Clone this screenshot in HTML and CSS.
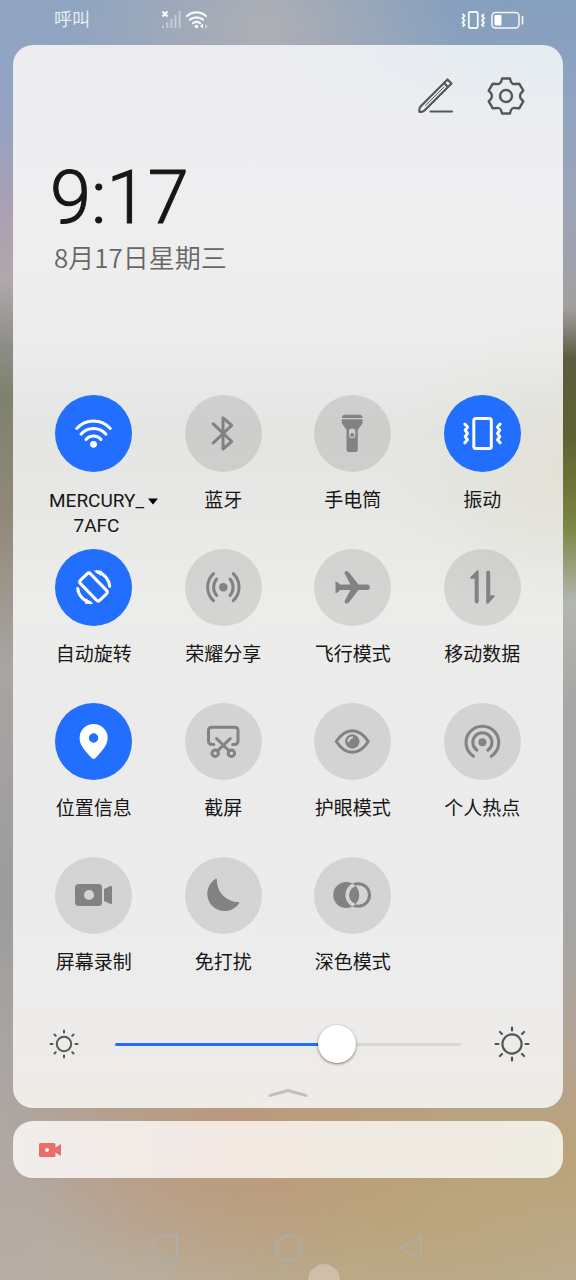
FILE: index.html
```html
<!DOCTYPE html>
<html lang="zh-CN">
<head>
<meta charset="utf-8">
<meta name="viewport" content="width=device-width, initial-scale=1">
<title>控制中心</title>
<link rel="stylesheet" href="styles.css">
</head>
<body>
<div class="screen">
  <header class="status">
    <span class="carrier">呼叫</span>
    <svg class="signal" width="48" height="20" viewBox="0 0 48 20" aria-hidden="true">
      <path d="M1.5 1.5l5 5M6.500 1.500l-5 5" stroke="#fff" stroke-width="1.800"/>
      <path d="M2 15.500v2.500M6.300 12.500v5.500M10.400 9v9M14.500 5v13M18.600 1v17" stroke="#fff" stroke-opacity=".4" stroke-width="2"/>
      <g fill="none" stroke="#fff" stroke-opacity=".92" stroke-width="2.200" stroke-linecap="round">
        <path d="M26 6a14 14 0 0 1 19 0M29 9.700a10 10 0 0 1 13 0M32 13.200a5.500 5.500 0 0 1 7 0"/>
      </g>
      <circle cx="35.500" cy="16.500" r="1.800" fill="#fff"/>
      <path d="M42 13.500v5l-3-2.500z" fill="#fff"/>
      <path d="M44 14v4.500l3-2.300z" fill="#fff" fill-opacity=".45"/>
    </svg>
    <svg class="power" width="64" height="20" viewBox="0 0 64 20" fill="none" stroke="#fff" stroke-opacity=".92" aria-hidden="true">
      <rect x="7.800" y="2" width="9" height="16" rx="1.500" stroke-width="1.800"/>
      <path d="M1.500 4l2 2-2 2.200 2 2.200-2 2.200 2 2.200-2 1.700M23 4l-2 2 2 2.200-2 2.200 2 2.200-2 2.200 2 1.700" stroke-width="1.800"/>
      <rect x="31" y="2.500" width="27" height="15.500" rx="3.500" stroke-width="1.500"/>
      <rect x="33.500" y="5" width="7" height="10.500" rx="1" fill="#fff" stroke="none"/>
      <path d="M61.500 6v8.500" stroke-width="1.600"/>
    </svg>
  </header>

  <main class="panel">
    <div class="tools">
      <button class="tool" aria-label="编辑">
        <svg width="38" height="38" viewBox="0 0 38 38" fill="none" stroke="#555658" stroke-width="2.200" stroke-linejoin="round" stroke-linecap="round" aria-hidden="true">
          <path d="M30.500 2.500l4 4L7.500 33.500Q5.500 35.300 2.300 34.700Q1.700 31.500 3.500 29.500zM27 6l4 4"/>
          <path d="M8.500 28.500L27 10" stroke-width="1"/>
          <path d="M13.500 34.500H35"/>
        </svg>
      </button>
      <button class="tool" aria-label="设置">
        <svg width="40" height="40" viewBox="-20 -20 40 40" fill="none" stroke="#555658" stroke-width="2.400" stroke-linejoin="round" aria-hidden="true">
          <path d="M-4-17.500H4L5-14Q6.500-11.500 9-12L13.200-12.300L17.300-5.400L14.700-2.500Q13.500 0 14.700 2.500L17.300 5.400L13.200 12.300L9 12Q6.500 11.500 5 14L4 17.500H-4L-5 14Q-6.500 11.500-9 12L-13.200 12.300L-17.300 5.400L-14.700 2.500Q-13.500 0-14.700-2.500L-17.300-5.400L-13.200-12.300L-9-12Q-6.500-11.500-5-14z"/>
          <circle r="6"/>
        </svg>
      </button>
    </div>

    <time class="clock" datetime="09:17">9:17</time>
    <p class="date">8月17日星期三</p>

    <section class="toggles">
      <button class="toggle on" aria-pressed="true">
        <svg class="disc" viewBox="0 0 77 77" aria-hidden="true">
          <g class="line"><path d="M21.700 33.500a22.600 22.600 0 0 1 33.600 0M26 39.200a16.400 16.400 0 0 1 25 0M31 44.500a9.600 9.600 0 0 1 15 0"/></g>
          <circle class="solid" cx="38.500" cy="49.300" r="3.400"/>
        </svg>
        <span class="label network"><span>MERCURY_<br>7AFC</span><svg class="caret" width="10" height="7" viewBox="0 0 10 7" aria-hidden="true"><path d="M0 .5h10L5 6.500z"/></svg></span>
      </button>
      <button class="toggle" aria-pressed="false">
        <svg class="disc" viewBox="0 0 77 77" aria-hidden="true"><path class="line" d="M28.200 28.800L46.700 46.500L38 54V22.800L46.700 30.300L28.200 48"/></svg>
        <span class="label">蓝牙</span>
      </button>
      <button class="toggle" aria-pressed="false">
        <svg class="disc" viewBox="0 0 77 77" aria-hidden="true">
          <path class="solid" d="M31 19.700h14.500q3 0 3 3.300h-20.700q0-3.300 3.200-3.300z"/>
          <path class="solid" fill-rule="evenodd" d="M27.800 24.300h20.700v3q0 1.500-1 2.500l-3.700 5V54.500q0 2.500-2.500 2.500h-6.300q-2.500 0-2.500-2.500V34.800l-3.700-5q-1-1-1-2.500zM38.200 33.500q-3.200 0-3.200 3.200v3.300q0 3.200 3.200 3.200t3.200-3.200v-3.300q0-3.200-3.200-3.200z"/>
          <circle class="solid" cx="38.200" cy="40" r="2.100"/>
        </svg>
        <span class="label">手电筒</span>
      </button>
      <button class="toggle on" aria-pressed="true">
        <svg class="disc" viewBox="0 0 77 77" aria-hidden="true"><g class="line"><rect x="29.800" y="23.500" width="17.500" height="30" rx="2"/><path d="M20.800 29l2.700 3-2.300 3.200 2.300 3.200-2.300 3.200 2.300 3.200-2.700 3M56.200 29l-2.700 3 2.300 3.200-2.300 3.200 2.300 3.200-2.300 3.200 2.700 3"/></g></svg>
        <span class="label">振动</span>
      </button>

      <button class="toggle on" aria-pressed="true">
        <svg class="disc" viewBox="0 0 77 77" aria-hidden="true">
          <g class="line"><rect x="24.500" y="31" width="28" height="14" rx="2.500" transform="rotate(46 38.500 38)"/><path d="M42 22.700a16.500 16.500 0 0 1 12.700 14.600M22.700 39.500a16.500 16.500 0 0 0 12.700 14.200"/></g>
          <path class="solid" d="M38.500 21.500l8.500.3-1 5.200zM38.500 55l-8.500-.3 1-5.200z"/>
        </svg>
        <span class="label">自动旋转</span>
      </button>
      <button class="toggle" aria-pressed="false">
        <svg class="disc" viewBox="0 0 77 77" aria-hidden="true"><path class="line" d="M31.700 30a12.500 12.500 0 0 0 0 16.500M28.500 24.700a18.500 18.500 0 0 0 0 27M45 30a12.500 12.500 0 0 1 0 16.500M48.200 24.700a18.500 18.500 0 0 1 0 27"/><circle class="solid" cx="38.300" cy="38.200" r="4.300"/></svg>
        <span class="label">荣耀分享</span>
      </button>
      <button class="toggle" aria-pressed="false">
        <svg class="disc" viewBox="0 0 77 77" aria-hidden="true"><path class="solid" d="M21.500 32.500q2 0 3.200 1.700l1.300 1.400h10.500l-5.800-11q-.5-2.500 1.600-2.700q1.700-.1 2.700 1.500L44.500 35.500H53a2.800 2.800 0 0 1 0 5.600H44.500L35 53.200q-1 1.500-2.700 1.400q-2.100-.3-1.600-2.700l5.800-10.900H26l-1.300 1.400q-1.200 1.700-3.200 1.700z"/></svg>
        <span class="label">飞行模式</span>
      </button>
      <button class="toggle" aria-pressed="false">
        <svg class="disc" viewBox="0 0 77 77" aria-hidden="true"><path class="solid" d="M34.700 22v30.500a2 2 0 0 1-4 0V29.800h-4q-1-.5-.3-1.500l6-6.500q1.800-1.200 2.300.2zM42.200 54v-30.500a2 2 0 0 1 4 0V46.200h4q1 .5.3 1.500l-6 6.500q-1.800 1.200-2.300-.2z"/></svg>
        <span class="label">移动数据</span>
      </button>

      <button class="toggle on" aria-pressed="true">
        <svg class="disc" viewBox="0 0 77 77" aria-hidden="true"><path class="solid" fill-rule="evenodd" d="M38.600 21a14 14 0 0 0-14 14c0 6.500 3.500 11 12.300 20.200q1.700 1.500 3.400 0C49 46 52.600 41.500 52.600 35a14 14 0 0 0-14-14zm0 9.300a4.700 4.700 0 1 1 0 9.400a4.700 4.700 0 0 1 0-9.400z"/></svg>
        <span class="label">位置信息</span>
      </button>
      <button class="toggle" aria-pressed="false">
        <svg class="disc" viewBox="0 0 77 77" aria-hidden="true"><path class="line" d="M28.800 41.500h-1.500q-3.800 0-3.800-3.500V27.500q0-3.200 3.500-3.200h22.500q3.500 0 3.500 3.200V38q0 3.500-3.800 3.500h-1.500M31.500 35.500L44 47.800M45.300 35.500L32.500 47.800"/><circle class="line" cx="30.200" cy="50.300" r="3.200"/><circle class="line" cx="46.400" cy="50.300" r="3.200"/></svg>
        <span class="label">截屏</span>
      </button>
      <button class="toggle" aria-pressed="false">
        <svg class="disc" viewBox="0 0 77 77" aria-hidden="true"><path class="line" d="M22.300 38.500Q29.300 27.700 38.300 27.700T54.300 38.500Q47.300 49.300 38.300 49.300T22.300 38.500z"/><circle class="solid" cx="38.300" cy="38.500" r="7.200"/><path d="M34.500 38.200q.3-3.300 3.700-3.800" fill="none" stroke="#d6d6d6" stroke-width="2" stroke-linecap="round"/></svg>
        <span class="label">护眼模式</span>
      </button>
      <button class="toggle" aria-pressed="false">
        <svg class="disc" viewBox="0 0 77 77" aria-hidden="true"><path class="line" d="M33 47.200a9.600 9.600 0 1 1 10.800 0M29.500 53.300a16.400 16.400 0 1 1 17.800 0"/><circle class="solid" cx="38.400" cy="39.300" r="4"/></svg>
        <span class="label">个人热点</span>
      </button>

      <button class="toggle" aria-pressed="false">
        <svg class="disc" viewBox="0 0 77 77" aria-hidden="true"><path class="solid" fill-rule="evenodd" d="M24 27h19.500q3.500 0 3.500 3.500v15q0 3.500-3.500 3.500H24q-4 0-4-3.500v-15q0-3.500 4-3.500zM34 33a5 5 0 1 0 0 10a5 5 0 0 0 0-10zM49 32l6.500-3q1.500-.3 1.500 1v16q0 1.300-1.500 1L49 44z"/></svg>
        <span class="label">屏幕录制</span>
      </button>
      <button class="toggle" aria-pressed="false">
        <svg class="disc" viewBox="0 0 77 77" aria-hidden="true"><path class="solid" d="M30.800 21.700A17.400 17.400 0 1 0 54.200 46.200Q54.700 45 53.500 45.200A22 22 0 0 1 31.800 22q-.2-.9-1-.3z"/></svg>
        <span class="label">免打扰</span>
      </button>
      <button class="toggle" aria-pressed="false">
        <svg class="disc" viewBox="0 0 77 77" aria-hidden="true">
          <clipPath id="left-disc"><circle cx="32.200" cy="38" r="13.100"/></clipPath>
          <circle class="solid" cx="32.200" cy="38" r="13"/>
          <circle class="line" cx="44.200" cy="38" r="11.300"/>
          <circle cx="44.200" cy="38" r="11" fill="none" stroke="#d4d4d4" stroke-width="3.600" clip-path="url(#left-disc)"/>
        </svg>
        <span class="label">深色模式</span>
      </button>
    </section>

    <div class="brightness">
      <svg width="38" height="38" viewBox="-19 -19 38 38" fill="none" stroke="#555" stroke-width="2" stroke-linecap="round" aria-hidden="true">
        <circle r="7.200"/>
        <path d="M0-11.500v-2M0 11.500v2M-11.500 0h-2M11.500 0h2M-8.300-8.300l-1.200-1.200M8.300-8.300l1.200-1.200M-8.300 8.300l-1.200 1.200M8.300 8.300l1.200 1.200"/>
      </svg>
      <input class="slider" type="range" min="0" max="100" value="66" aria-label="亮度">
      <svg width="38" height="38" viewBox="-19 -19 38 38" fill="none" stroke="#555" stroke-width="2.200" stroke-linecap="round" aria-hidden="true">
        <circle r="9.600"/>
        <path d="M0-13.500v-3M0 13.500v3M-13.500 0h-3M13.500 0h3M-10-10l-2-2M10-10l2-2M-10 10l-2 2M10 10l2 2"/>
      </svg>
    </div>
    <button class="handle" aria-label="收起">
      <svg width="42" height="12" viewBox="0 0 42 12" fill="none" stroke="#c2c0be" stroke-width="3" stroke-linecap="round" stroke-linejoin="round" aria-hidden="true"><path d="M3 8.500L21 3.500L39 8.500"/></svg>
    </button>
  </main>

  <article class="notice" aria-label="屏幕录制">
    <svg width="23" height="16" viewBox="0 0 23 16" aria-hidden="true"><path fill="#e57068" fill-rule="evenodd" d="M1.500 1H15q1.500 0 1.500 1.500v11q0 1.500-1.500 1.500H1.500Q0 15 0 13.500v-11Q0 1 1.500 1zM8 6a2 2 0 1 0 0 4a2 2 0 0 0 0-4zM16.500 5.500l5.500-3.500v12l-5.500-3.500z"/></svg>
  </article>

  <nav class="navbar">
    <button aria-label="最近任务"><svg width="27" height="28" viewBox="0 0 27 28" aria-hidden="true"><rect x="2" y="2.500" width="23" height="23" rx="1"/></svg></button>
    <button aria-label="主屏幕"><svg width="27" height="28" viewBox="0 0 27 28" aria-hidden="true"><circle cx="13.500" cy="14" r="12.300"/></svg></button>
    <button aria-label="返回"><svg width="27" height="28" viewBox="0 0 27 28" aria-hidden="true"><path d="M2.500 14L23 2v24z"/></svg></button>
  </nav>
  <span class="touch"></span>
</div>
</body>
</html>
```

FILE: styles.css
```css
* {
  box-sizing: border-box;
}

body {
  margin: 0;
  font-family: Roboto, "Noto Sans CJK SC", sans-serif;
  color: #161616;
}

button {
  margin: 0;
  padding: 0;
  border: 0;
  background: none;
  font: inherit;
  color: inherit;
}

svg {
  display: block;
}

.screen {
  position: relative;
  z-index: 0;
  display: flex;
  flex-direction: column;
  min-height: 100vh;
  padding: 0 13px;
  overflow: hidden;
  background: linear-gradient(to bottom, #859fbe 0, #8fa4c0 8%, #9ba4b8 16%, #a39f9f 24%, #5c5c40 28%, #5f6030 34%, #7b8440 41%, #b2b7ae 47%, #a9a6a6 55%, #a5a5a5 72%, #b3a493 82%, #bba27a 90%, #bbb096 100%);
}

/* Left side of the blurred wallpaper, fading into the right side. */
.screen::before {
  content: "";
  position: absolute;
  inset: 0;
  z-index: -2;
  background: linear-gradient(to bottom, #90a5c0 0, #92a3c4 8%, #aa9fb3 16%, #b0a8aa 22%, #8d8d88 27%, #7f816c 31%, #908878 40%, #aaa4a2 52%, #9c9c9c 70%, #aaa4a1 82%, #b8ada4 100%);
  mask-image: linear-gradient(to right, #000 5%, transparent 60%);
}

.screen::after {
  content: "";
  position: absolute;
  inset: 0;
  z-index: -1;
  background:
    radial-gradient(ellipse 34% 12% at 46% 2%, rgba(176, 176, 180, .95), transparent),
    radial-gradient(ellipse 40% 12% at 40% 89%, rgba(188, 150, 122, .85), transparent),
    radial-gradient(ellipse 50% 14% at 72% 95%, rgba(186, 163, 118, .7), transparent);
}

.status {
  display: flex;
  align-items: center;
  height: 45px;
  padding: 0 38px 6px 41px;
  color: rgba(255, 255, 255, .8);
}

.carrier {
  font-size: 18px;
  line-height: 24px;
}

.signal {
  margin-left: 71px;
}

.power {
  margin-left: auto;
}

.panel {
  display: flex;
  flex-direction: column;
  padding: 31px 16px 0;
  border-radius: 20px;
  background:
    radial-gradient(ellipse 45% 10% at 90% 0, rgba(228, 236, 241, .9), transparent),
    radial-gradient(ellipse 32% 14% at 100% 40%, rgba(222, 222, 206, .6), transparent),
    linear-gradient(to bottom, #ececf0 0, #efeeef 20%, #ececec 28%, #e5e5e4 36%, #e7e7e5 43%, #ececeb 52%, #ebebeb 66%, #ececec 88%, #efebe6 100%);
}

.tools {
  display: flex;
  justify-content: flex-end;
  gap: 30px;
  padding-right: 21px;
}

.tool {
  display: grid;
  place-items: center;
  width: 40px;
  height: 40px;
}

.clock {
  margin: 46px 0 0 21px;
  font-size: 74px;
  font-weight: 300;
  line-height: 72px;
  -webkit-text-stroke: 1px #161616;
}

.date {
  margin: 8px 0 0 25px;
  font-family: "Noto Sans CJK SC", sans-serif;
  font-size: 26px;
  font-weight: 350;
  line-height: 30px;
  color: #666;
}

.toggles {
  display: grid;
  grid-template-columns: repeat(4, 1fr);
  grid-auto-rows: 154px;
  margin-top: 123px;
}

.toggle {
  display: flex;
  flex-direction: column;
  align-items: center;
  gap: 16px;
}

.disc {
  flex: none;
  width: 77px;
  height: 77px;
  border-radius: 50%;
  background: rgba(0, 0, 0, .1);
  color: #828282;
}

.on .disc {
  background: #226eff;
  color: #fff;
}

.line {
  fill: none;
  stroke: currentColor;
  stroke-width: 3px;
  stroke-linecap: round;
  stroke-linejoin: round;
}

.solid {
  fill: currentColor;
}

.label {
  font-size: 19px;
  line-height: 25px;
}

.network {
  display: flex;
  gap: 4px;
  align-self: flex-start;
  padding-left: 20px;
}

.caret {
  margin-top: 10px;
}

.brightness {
  display: flex;
  align-items: center;
  height: 66px;
  padding: 0 16px;
}

.slider {
  flex: 1;
  min-width: 0;
  height: 40px;
  margin: 0 32px;
  appearance: none;
  background: none;
}

.slider::-webkit-slider-runnable-track {
  height: 3px;
  border-radius: 2px;
  background: linear-gradient(to right, #226eff 62%, #d8d7d5 62%);
}

.slider::-webkit-slider-thumb {
  appearance: none;
  width: 38px;
  height: 38px;
  margin-top: -18px;
  border-radius: 50%;
  background: #fff;
  box-shadow: 0 1px 3px rgba(0, 0, 0, .5);
}

.handle {
  display: grid;
  place-items: center;
  height: 31px;
}

.notice {
  display: flex;
  align-items: center;
  height: 57px;
  margin-top: 13px;
  padding-left: 26px;
  border-radius: 20px;
  background: linear-gradient(to right, #f0edeb, #f2e8e2 40%, #efeae2 70%, #efece2);
}

.navbar {
  display: flex;
  justify-content: center;
  align-items: center;
  gap: 96px;
  height: 64px;
  margin-top: auto;
}

.navbar svg {
  fill: none;
  stroke: #adadaa;
  stroke-width: 2px;
  stroke-linejoin: round;
}

.touch {
  position: absolute;
  bottom: -17px;
  left: 307px;
  width: 34px;
  height: 34px;
  border: 1px solid rgba(150, 120, 100, .4);
  border-radius: 50%;
  background: #cfbfa8;
}
```
